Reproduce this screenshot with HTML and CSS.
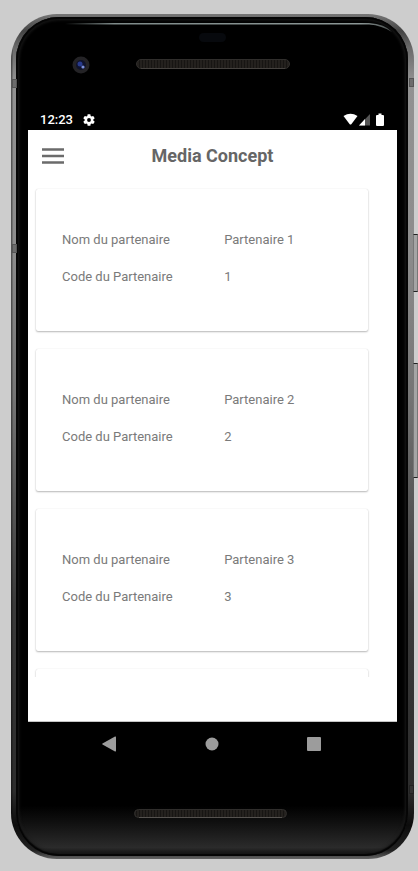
FILE: index.html
```html
<!DOCTYPE html>
<html lang="fr">
<head>
<meta charset="utf-8">
<meta name="viewport" content="width=device-width, initial-scale=1">
<title>Media Concept</title>
<link rel="stylesheet" href="styles.css">
</head>
<body>
<div class="phone">
  <span class="key key-power"></span>
  <span class="key key-volume"></span>
  <span class="seam seam-left-top"></span>
  <span class="seam seam-left-mid"></span>
  <span class="seam seam-right-top"></span>
  <span class="seam seam-right-low"></span>
  <div class="glass">
    <svg class="bezel" viewBox="0 0 369 91" aria-hidden="true">
      <defs>
        <pattern id="mesh" width="3" height="3" patternUnits="userSpaceOnUse">
          <rect width="3" height="3" fill="#24211e"/>
          <rect width="1" height="3" fill="#171513"/>
        </pattern>
        <linearGradient id="shine" gradientUnits="userSpaceOnUse" x1="37" y1="0" x2="365" y2="0">
          <stop offset="0" stop-color="#7f8b8a" stop-opacity="0"/>
          <stop offset=".15" stop-color="#7f8b8a"/>
          <stop offset=".9" stop-color="#8b9695"/>
          <stop offset="1" stop-color="#8b9695" stop-opacity=".5"/>
        </linearGradient>
      </defs>
      <path d="M37 6H341Q357 7 364 15Q354 8.500 341 7.500H37Z" fill="url(#shine)"/>
      <circle cx="53" cy="48" r="8.500" fill="#242326"/>
      <circle cx="53" cy="48" r="5" fill="#10132c"/>
      <circle cx="52" cy="47" r="2.500" fill="#283a8c"/>
      <circle cx="55" cy="50" r="1.600" fill="#7c91dc"/>
      <rect x="171" y="16" width="27" height="9" rx="4.500" fill="#07090d"/>
      <rect x="108.500" y="42.500" width="153" height="9" rx="4.500" fill="url(#mesh)" stroke="#302e2c"/>
      <path d="M113 51.500H257" stroke="#45423f"/>
    </svg>
    <div class="status">
      <span class="clock">12:23</span>
      <svg class="gear" viewBox="2 2 20 20" aria-hidden="true"><path fill="#fff" d="M19.140 12.940c.04-.3.06-.61.06-.94s-.02-.64-.07-.94l2.030-1.580a.5.5 0 0 0 .12-.61l-1.920-3.320a.5.5 0 0 0-.59-.22l-2.390.96a7 7 0 0 0-1.620-.94L14.400 2.810a.5.5 0 0 0-.48-.41h-3.840a.5.5 0 0 0-.47.41L9.250 5.350a7 7 0 0 0-1.620.94l-2.390-.96a.5.5 0 0 0-.59.22L2.740 8.870a.5.5 0 0 0 .12.610l2.030 1.580a7 7 0 0 0 0 1.880l-2.030 1.580a.5.5 0 0 0-.12.610l1.920 3.320c.12.220.37.290.59.220l2.390-.96c.5.380 1.030.7 1.620.94l.36 2.540c.05.240.24.410.48.410h3.840c.24 0 .44-.17.47-.41l.36-2.540a7 7 0 0 0 1.620-.94l2.390.96c.22.080.47 0 .59-.22l1.920-3.320a.5.5 0 0 0-.12-.61zM12 15.200a3.200 3.200 0 1 1 0-6.400 3.200 3.200 0 0 1 0 6.400z"/></svg>
      <svg class="signals" viewBox="0 0 42 14" aria-hidden="true">
        <path fill="#fff" d="M0.500 3Q7.500-1.500 14.500 3L8.500 11Q7.500 12 6.500 11Z"/>
        <path fill="#555" d="M27 1V12.500H16Z"/>
        <path fill="#fff" d="M22 6V12.500H16Z"/>
        <path fill="#fff" d="M34 2h1.500V.5h3V2H40q1 0 1 1v9q0 1-1 1h-6q-1 0-1-1V3q0-1 1-1Z"/>
      </svg>
    </div>
    <main class="screen">
      <header class="appbar">
        <button class="menu" type="button" aria-label="Menu">
          <svg viewBox="0 0 22 16" aria-hidden="true"><path d="M0 1.500H22M0 8H22M0 14.500H22" stroke="#6b6b6b" stroke-width="2.400"/></svg>
        </button>
        <h1 class="title">Media Concept</h1>
      </header>
      <div class="list">
        <dl class="card">
          <dt>Nom du partenaire</dt><dd>Partenaire 1</dd>
          <dt>Code du Partenaire</dt><dd>1</dd>
        </dl>
        <dl class="card">
          <dt>Nom du partenaire</dt><dd>Partenaire 2</dd>
          <dt>Code du Partenaire</dt><dd>2</dd>
        </dl>
        <dl class="card">
          <dt>Nom du partenaire</dt><dd>Partenaire 3</dd>
          <dt>Code du Partenaire</dt><dd>3</dd>
        </dl>
        <div class="card"></div>
      </div>
    </main>
    <nav class="navbar">
      <button type="button" aria-label="Retour"><svg viewBox="0 0 16 16"><path fill="#9c9c9c" d="M14 .6Q15 .1 15 1.200V14.800Q15 15.900 14 15.400L1.500 8.500Q.8 8 1.500 7.500Z"/></svg></button>
      <button type="button" aria-label="Accueil"><svg viewBox="0 0 16 16"><circle cx="8" cy="8" r="6.500" fill="#9c9c9c"/></svg></button>
      <button type="button" aria-label="Applications"><svg viewBox="0 0 16 16"><rect x="1" y="1" width="14" height="14" rx="1" fill="#9c9c9c"/></svg></button>
    </nav>
    <svg class="bezel" viewBox="0 0 369 91" aria-hidden="true">
      <rect x="106.500" y="44.500" width="152" height="8" rx="4" fill="url(#mesh)" stroke="#302e2c"/>
      <path d="M111 52.500H254" stroke="#55524f"/>
    </svg>
  </div>
</div>
</body>
</html>
```
FILE: styles.css
```css
* {
  box-sizing: border-box;
}

body {
  margin: 0;
  padding: 14px 4px 12px 11px;
  background: #cdcdcd;
  font-family: Roboto, "Liberation Sans", sans-serif;
  color: #7a7a7a;
}

.phone {
  position: relative;
  padding: 3px 6px 3px 5px;
  border-radius: 46px;
  background:
    linear-gradient(to right, rgba(0, 0, 0, 0.4) 1px, transparent 2px),
    linear-gradient(#777, #444 2%, #6a6a6a 4%, #929292 8%, #8c8c8c 28%, #757575 45%, #3a3a3a 70%, #2c2c2c 92%, #0c0c0c 96%, #222 99%, #666);
}

.glass {
  display: flex;
  flex-direction: column;
  padding: 0 11px 0 12px;
  border-radius: 43px;
  background: linear-gradient(#000 94%, #101010 96%, #2b2b2b 99%, #0c0c0c);
  box-shadow:
    inset 0 0 1px 2px #050505,
    inset 0 0 3px 3px #1c1c1c;
}

.bezel {
  display: block;
  width: 100%;
  height: 91px;
}

.status {
  display: flex;
  align-items: center;
  height: 22px;
  padding: 2px 12px 0;
  background: #000;
  color: #fff;
}

.clock {
  font-size: 13px;
  line-height: 20px;
  font-weight: 500;
}

.gear {
  width: 12px;
  height: 12px;
  margin-left: 10px;
}

.signals {
  width: 42px;
  height: 14px;
  margin-left: auto;
}

.screen {
  padding-bottom: 44px;
  border-bottom: 1px solid #c4c4c4;
  background: #fff;
}

.appbar {
  display: grid;
  grid-template-columns: 22px 1fr 22px;
  align-items: center;
  height: 52px;
  padding: 0 14px;
}

button {
  padding: 0;
  border: 0;
  background: none;
}

.menu,
.menu svg {
  display: block;
  width: 22px;
  height: 16px;
}

.title {
  margin: 0;
  font-size: 18px;
  line-height: 24px;
  font-weight: 700;
  text-align: center;
  color: #666;
}

.list {
  display: flex;
  flex-direction: column;
  gap: 18px;
  height: 495px;
  padding: 7px 29px 0 8px;
  overflow: hidden;
}

.card {
  display: grid;
  flex: none;
  grid-template-columns: 53fr 47fr;
  grid-auto-rows: 20px;
  row-gap: 17px;
  height: 142px;
  margin: 0;
  padding: 41px 0 0 26px;
  border-radius: 2px;
  background: #fff;
  box-shadow:
    0 0 1px rgba(0, 0, 0, 0.15),
    0 1px 2px rgba(0, 0, 0, 0.28);
  font-size: 13px;
  line-height: 20px;
}

.card dt,
.card dd {
  margin: 0;
}

.navbar {
  display: flex;
  justify-content: space-between;
  align-items: center;
  height: 43px;
  padding: 0 75px 0 73px;
}

.navbar button,
.navbar svg {
  display: block;
  width: 16px;
  height: 16px;
}

.key {
  position: absolute;
  right: -4px;
  width: 5px;
  border: 1px solid #777;
  border-top-color: #222;
  border-bottom-color: #222;
  background: #a5a5a5;
}

.key-power {
  top: 220px;
  height: 58px;
}

.key-volume {
  top: 349px;
  height: 115px;
}

.seam {
  position: absolute;
  width: 5px;
  height: 9px;
  border: 1px solid #555;
  background: #6c6c6c;
}

.seam-left-top {
  top: 65px;
  left: 1px;
}

.seam-left-mid {
  top: 230px;
  left: 1px;
}

.seam-right-top {
  top: 64px;
  right: 0;
}

.seam-right-low {
  top: 771px;
  right: 0;
  border-color: #222;
  background: #333;
}
```
